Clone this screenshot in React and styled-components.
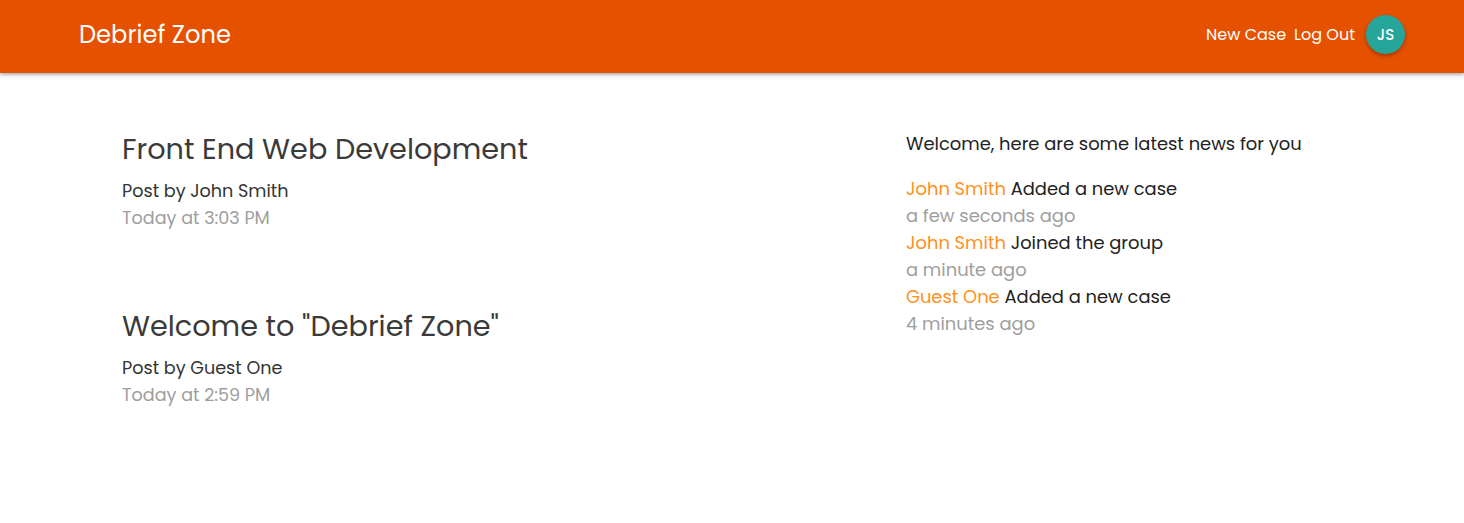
import React from "react";
import styled, { createGlobalStyle } from "styled-components";

const GlobalStyle = createGlobalStyle`
  html, body {
    margin: 0;
    padding: 0;
    background: #fff;
  }
  body {
    font-family: "Poppins", "DejaVu Sans", sans-serif;
    color: #333;
  }
`;

const posts = [
  { title: "Front End Web Development", author: "John Smith", time: "Today at 3:03 PM" },
  { title: 'Welcome to "Debrief Zone"', author: "Guest One", time: "Today at 2:59 PM" },
];

const events = [
  { who: "John Smith", what: "Added a new case", when: "a few seconds ago" },
  { who: "John Smith", what: "Joined the group", when: "a minute ago" },
  { who: "Guest One", what: "Added a new case", when: "4 minutes ago" },
];

const App = () => {
  return (
    <>
      <GlobalStyle />
      <NavBar>
        <Brand>Debrief Zone</Brand>
        <NavRight>
          <NavLink>New Case</NavLink>
          <NavLink>Log Out</NavLink>
          <Avatar>JS</Avatar>
        </NavRight>
      </NavBar>
      <Main>
        <PostList>
          {posts.map((p, i) => (
            <Post key={i}>
              <PostTitle>{p.title}</PostTitle>
              <Meta>Post by {p.author}</Meta>
              <Muted>{p.time}</Muted>
            </Post>
          ))}
        </PostList>
        <Feed>
          <FeedHeading>Welcome, here are some latest news for you</FeedHeading>
          {events.map((e, i) => (
            <FeedItem key={i}>
              <Summary>
                <Who>{e.who}</Who> {e.what}
              </Summary>
              <Muted $size="17.9px">{e.when}</Muted>
            </FeedItem>
          ))}
        </Feed>
      </Main>
    </>
  );
};

const NavBar = styled.header`
  height: 73px;
  box-sizing: border-box;
  background: #e65100;
  display: flex;
  align-items: center;
  justify-content: space-between;
  padding: 0 59px 5px 79px;
  box-shadow: 0 2px 3px rgba(0, 0, 0, 0.3);
  position: relative;
`;

const Brand = styled.div`
  color: #fff;
  font-size: 24.2px;
`;

const NavRight = styled.nav`
  display: flex;
  align-items: center;
  gap: 8px;
`;

const NavLink = styled.a`
  color: #fff;
  font-size: 16px;
  cursor: pointer;
`;

const Avatar = styled.div`
  width: 39px;
  height: 39px;
  margin-left: 3px;
  border-radius: 50%;
  background: #26a69a;
  color: #fff;
  font-size: 15px;
  font-weight: 500;
  display: flex;
  align-items: center;
  justify-content: center;
  box-shadow: 0 2px 4px rgba(0, 0, 0, 0.3);
`;

const Main = styled.main`
  display: grid;
  grid-template-columns: 784px 1fr;
  padding: 0 0 0 122px;
`;

const PostList = styled.section`
  display: flex;
  flex-direction: column;
  gap: 74px;
  padding-top: 56px;
`;

const Post = styled.article`
  display: flex;
  flex-direction: column;
`;

const PostTitle = styled.h2`
  margin: 0 0 9px;
  font-weight: normal;
  font-size: 28.7px;
  line-height: 40px;
  color: #3a3a3a;
`;

const Meta = styled.div`
  font-size: 17.6px;
  line-height: 27px;
  color: #333;
`;

const Muted = styled.div`
  font-size: ${(p) => p.$size || "17.6px"};
  line-height: 27px;
  color: #9e9e9e;
`;

const Feed = styled.aside`
  padding-top: 57px;
`;

const FeedHeading = styled.div`
  font-size: 17.9px;
  line-height: 27px;
  color: #222;
  margin-bottom: 18px;
`;

const FeedItem = styled.div``;

const Summary = styled.div`
  font-size: 17.9px;
  line-height: 27px;
  color: #222;
`;

const Who = styled.span`
  color: #ff9020;
`;

export default App;
